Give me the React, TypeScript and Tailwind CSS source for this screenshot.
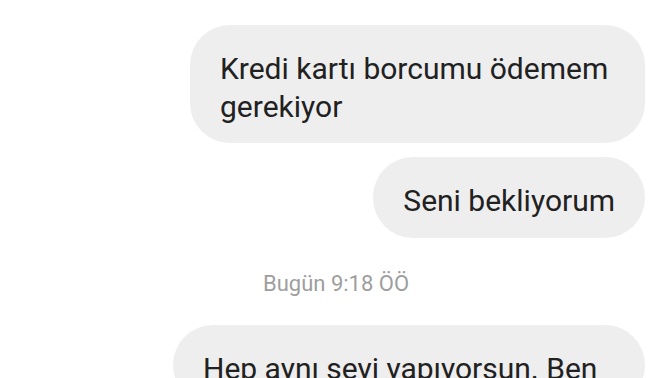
import React from "react";

const font = { fontFamily: "Roboto, 'Noto Sans', 'Liberation Sans', sans-serif" };

function Bubble({ children, className = "" }: { children: React.ReactNode; className?: string }) {
  return (
    <div
      className={`bg-[#eeeeee] text-[#212121] rounded-[40px] px-[30px] pt-[25px] pb-[18px] text-[30px] leading-[37.5px] ${className}`}
    >
      {children}
    </div>
  );
}

export default function App() {
  return (
    <div className="w-[672px] h-[378px] overflow-hidden bg-white" style={font}>
      <div className="flex flex-col items-end pr-[27px] pt-[25px]">
        <Bubble className="w-[455px]">Kredi kartı borcumu ödemem gerekiyor</Bubble>
        <Bubble className="mt-[14px] whitespace-nowrap">Seni bekliyorum</Bubble>
        <div className="self-stretch pl-[27px] mt-[32px] text-center text-[22px] leading-[28px] text-[#9e9e9e]">
          Bugün 9:18 ÖÖ
        </div>
        <Bubble className="mt-[27px] w-[472px]">Hep aynı şeyi yapıyorsun. Ben</Bubble>
      </div>
    </div>
  );
}
